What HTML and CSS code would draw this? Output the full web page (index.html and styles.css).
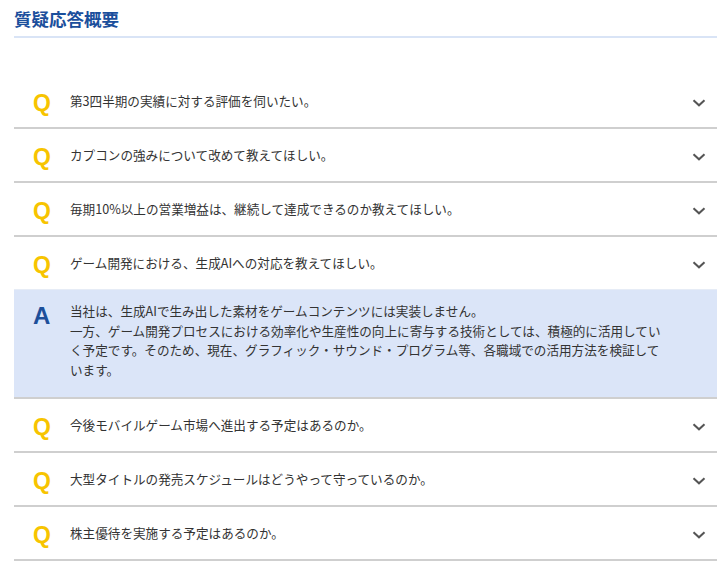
FILE: index.html
```html
<!DOCTYPE html>
<html lang="ja">
<head>
    <meta charset="UTF-8">
    <meta name="viewport" content="width=device-width, initial-scale=1.0">
    <title>質疑応答概要</title>
    <link rel="stylesheet" href="styles.css">
</head>
<body>

    <div class="qa-section">
        <h2 class="qa-title">質疑応答概要</h2>

        <div class="qa-list">
            <div class="qa-item">
                <div class="qa-question">
                    <span class="mark-q">Q</span>
                    <span class="q-text">第3四半期の実績に対する評価を伺いたい。</span>
                    <svg class="chevron" width="14" height="8" viewBox="0 0 14 8"><path d="M1.5 1.2 7 6.3 12.5 1.2" fill="none" stroke="#555" stroke-width="2"/></svg>
                </div>
            </div>
            <div class="qa-item">
                <div class="qa-question">
                    <span class="mark-q">Q</span>
                    <span class="q-text">カプコンの強みについて改めて教えてほしい。</span>
                    <svg class="chevron" width="14" height="8" viewBox="0 0 14 8"><path d="M1.5 1.2 7 6.3 12.5 1.2" fill="none" stroke="#555" stroke-width="2"/></svg>
                </div>
            </div>
            <div class="qa-item">
                <div class="qa-question">
                    <span class="mark-q">Q</span>
                    <span class="q-text">毎期10%以上の営業増益は、継続して達成できるのか教えてほしい。</span>
                    <svg class="chevron" width="14" height="8" viewBox="0 0 14 8"><path d="M1.5 1.2 7 6.3 12.5 1.2" fill="none" stroke="#555" stroke-width="2"/></svg>
                </div>
            </div>
            <div class="qa-item open">
                <div class="qa-question">
                    <span class="mark-q">Q</span>
                    <span class="q-text">ゲーム開発における、生成AIへの対応を教えてほしい。</span>
                    <svg class="chevron" width="14" height="8" viewBox="0 0 14 8"><path d="M1.5 1.2 7 6.3 12.5 1.2" fill="none" stroke="#555" stroke-width="2"/></svg>
                </div>
                <div class="qa-answer">
                    <span class="mark-a">A</span>
                    <p class="a-text">当社は、生成AIで生み出した素材をゲームコンテンツには実装しません。<br>一方、ゲーム開発プロセスにおける効率化や生産性の向上に寄与する技術としては、積極的に活用していく予定です。そのため、現在、グラフィック・サウンド・プログラム等、各職域での活用方法を検証しています。</p>
                </div>
            </div>
            <div class="qa-item">
                <div class="qa-question">
                    <span class="mark-q">Q</span>
                    <span class="q-text">今後モバイルゲーム市場へ進出する予定はあるのか。</span>
                    <svg class="chevron" width="14" height="8" viewBox="0 0 14 8"><path d="M1.5 1.2 7 6.3 12.5 1.2" fill="none" stroke="#555" stroke-width="2"/></svg>
                </div>
            </div>
            <div class="qa-item">
                <div class="qa-question">
                    <span class="mark-q">Q</span>
                    <span class="q-text">大型タイトルの発売スケジュールはどうやって守っているのか。</span>
                    <svg class="chevron" width="14" height="8" viewBox="0 0 14 8"><path d="M1.5 1.2 7 6.3 12.5 1.2" fill="none" stroke="#555" stroke-width="2"/></svg>
                </div>
            </div>
            <div class="qa-item">
                <div class="qa-question">
                    <span class="mark-q">Q</span>
                    <span class="q-text">株主優待を実施する予定はあるのか。</span>
                    <svg class="chevron" width="14" height="8" viewBox="0 0 14 8"><path d="M1.5 1.2 7 6.3 12.5 1.2" fill="none" stroke="#555" stroke-width="2"/></svg>
                </div>
            </div>
        </div>
    </div>

</body>
</html>
```
FILE: styles.css
```css
/* IR page: Q&A summary accordion */
body {
    margin: 0;
    background: #fff;
    color: #333;
    font-family: "Noto Sans CJK JP", "Noto Sans", sans-serif;
}
.qa-section {
    padding: 8px 11px 0 14px;
}
.qa-title {
    margin: 0;
    padding-bottom: 6px;
    font-size: 17.5px;
    line-height: 22px;
    font-weight: bold;
    color: #1b4f9c;
    border-bottom: 2px solid #d9e4f6;
}
.qa-list {
    margin-top: 37px;
}
.qa-item {
    border-bottom: 2px solid #cfcfcf;
}
.qa-item.open {
    border-bottom: none;
}
.qa-question {
    display: flex;
    align-items: center;
    height: 52px;
}
.mark-q,
.mark-a {
    width: 56px;
    padding-left: 19px;
    box-sizing: border-box;
    font-family: "Liberation Sans", Arial, sans-serif;
    font-weight: bold;
}
.mark-q {
    font-size: 23px;
    color: #f7c400;
    margin-top: 5px;
}
.q-text {
    flex: 1;
    font-size: 12.6px;
    line-height: 18px;
    color: #333;
}
.chevron {
    margin-right: 11px;
    margin-top: 4px;
}
.qa-answer {
    display: flex;
    background: #dbe5f8;
    border-top: 1px solid #e6ecf6;
    border-bottom: 2px solid #cfcfcf;
    padding: 11px 0 18px;
}
.mark-a {
    font-size: 24px;
    line-height: 30px;
    color: #1d4f9a;
}
.a-text {
    margin: 0;
    width: 600px;
    font-size: 12.6px;
    line-height: 19.5px;
    color: #333;
}
```
